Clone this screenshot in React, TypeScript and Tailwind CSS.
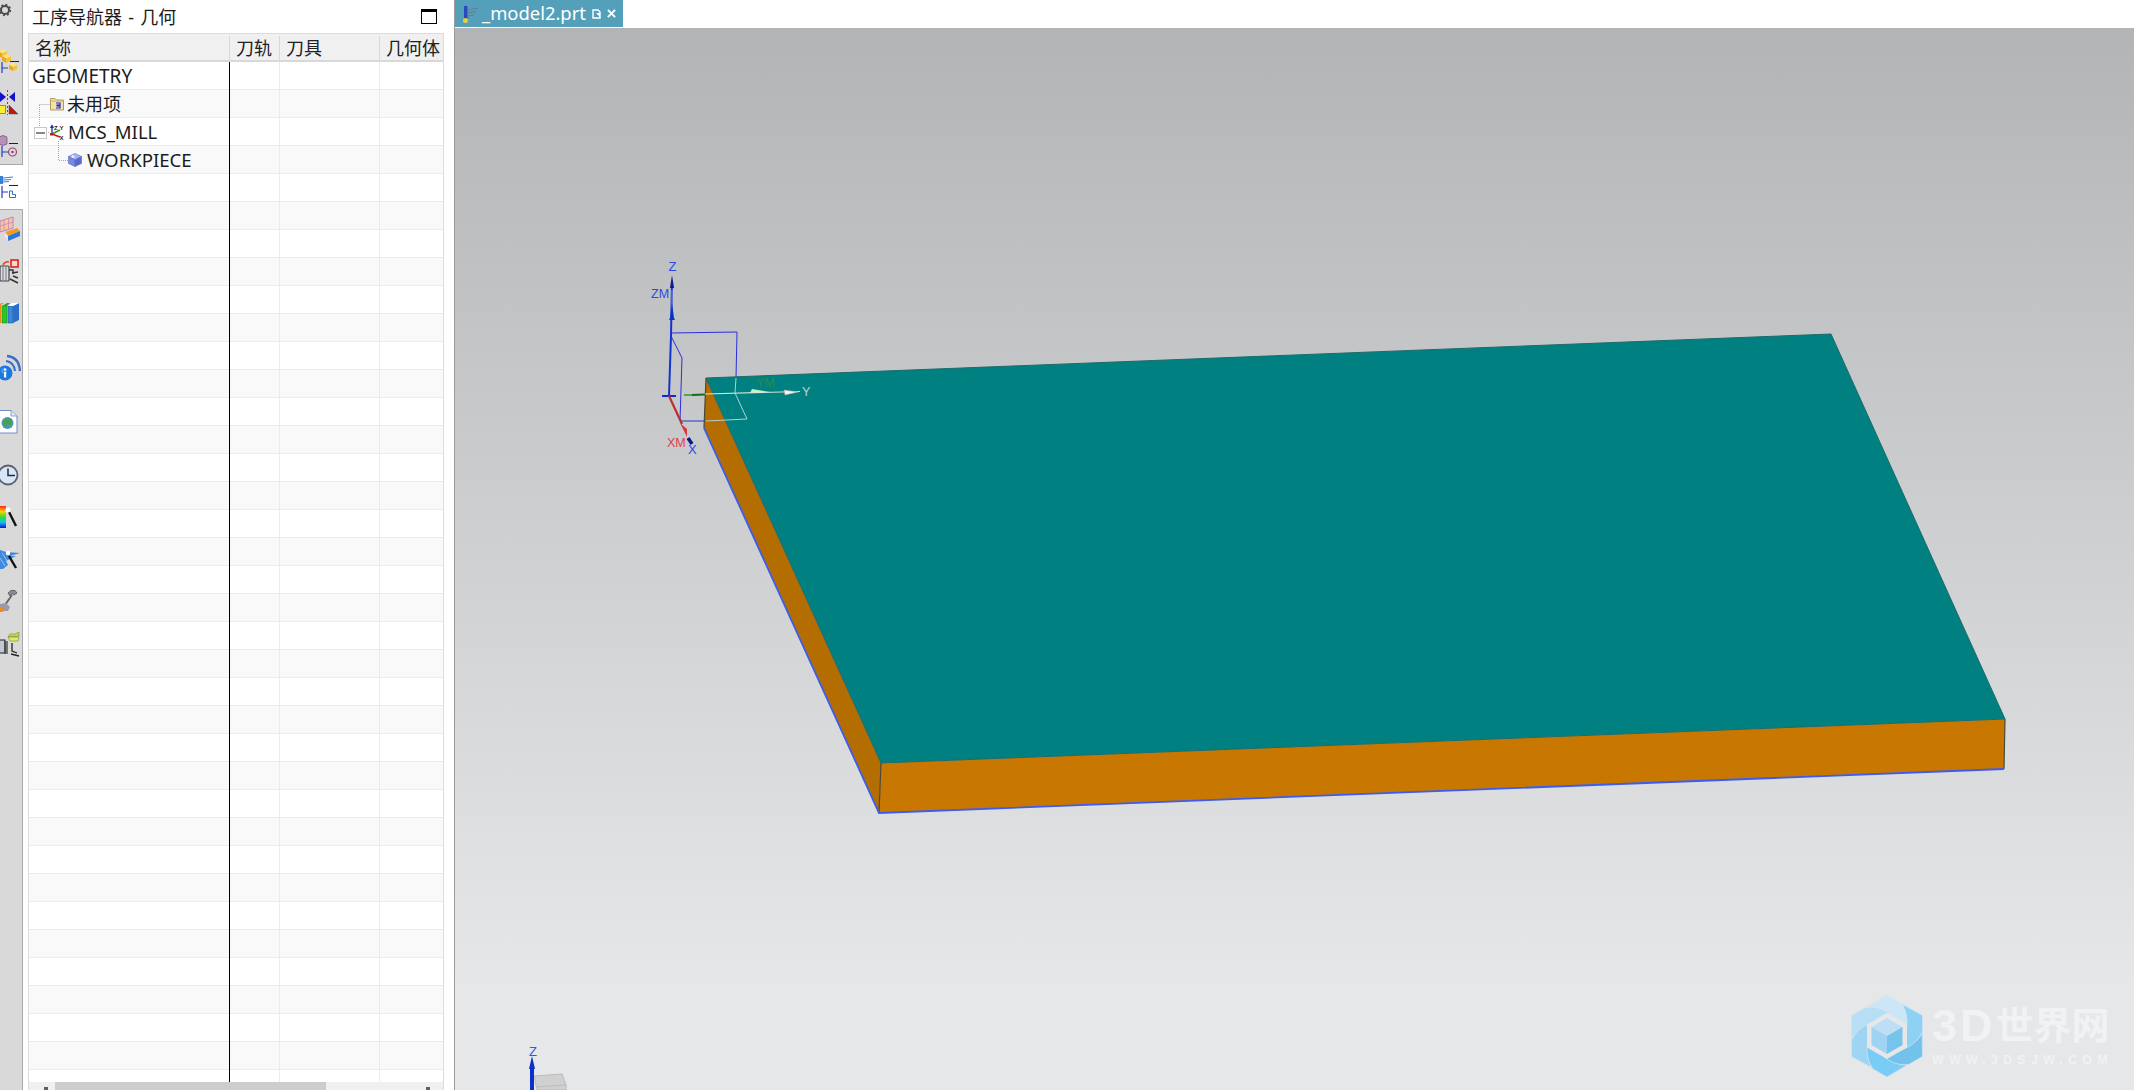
import React from "react";

const ROWS = Array.from({ length: 37 }, (_, i) => i);

function Cube({ x, y, s, top, left, right }: { x: number; y: number; s: number; top: string; left: string; right: string }) {
  const h = s / 4;
  return (
    <g>
      <polygon points={`${x},${y + h} ${x + s / 2},${y} ${x + s},${y + h} ${x + s / 2},${y + 2 * h}`} fill={top} />
      <polygon points={`${x},${y + h} ${x + s / 2},${y + 2 * h} ${x + s / 2},${y + 4 * h} ${x},${y + 3 * h}`} fill={left} />
      <polygon points={`${x + s},${y + h} ${x + s / 2},${y + 2 * h} ${x + s / 2},${y + 4 * h} ${x + s},${y + 3 * h}`} fill={right} />
    </g>
  );
}

function Rail() {
  return (
    <div className="flex w-[23px] shrink-0 flex-col overflow-hidden">
      <div className="flex h-[165px] shrink-0 flex-col border-r border-b border-[#a8a8a8] bg-[#d9d9d9]">
        <svg className="block h-[40px] w-[22px] shrink-0" viewBox="0 0 22 40">
          <circle cx="5" cy="10" r="4" fill="none" stroke="#4a4a4a" strokeWidth="2" />
          <circle cx="5" cy="10" r="5.4" fill="none" stroke="#4a4a4a" strokeWidth="1.5" strokeDasharray="2 2.2" />
        </svg>
        <svg className="block h-[42px] w-[22px] shrink-0" viewBox="0 40 22 42">
          <Cube x={-2} y={49} s={9} top="#ffe27a" left="#e8a820" right="#f4c430" />
          <Cube x={2} y={54} s={9} top="#ffe27a" left="#e8a820" right="#f4c430" />
          <path d="M10 61.5H19" stroke="#222" strokeWidth="1" />
          <path d="M2 62V73M2 68H8" stroke="#1f3fc0" strokeWidth="1.2" fill="none" />
          <Cube x={9} y={63} s={8} top="#ffe27a" left="#e8a820" right="#f4c430" />
        </svg>
        <svg className="block h-[42px] w-[22px] shrink-0" viewBox="0 82 22 42">
          <polygon points="0,92 6,97 0,102" fill="#1212c8" />
          <polygon points="15,92 9,97 15,102" fill="#1212c8" />
          <path d="M7.5 90V115" stroke="#333" strokeDasharray="2 2" strokeWidth="0.8" />
          <rect x="-1" y="105.5" width="6.5" height="8" fill="#ffee30" stroke="#555" strokeWidth="0.6" />
          <polygon points="9,105 18,114 9,114" fill="#c81010" stroke="#555" strokeWidth="0.5" />
        </svg>
        <svg className="block h-[40px] w-[22px] shrink-0" viewBox="0 124 22 40">
          <path d="M-1 137Q3 134 7 137V144Q3 147-1 144Z" fill="#b890b8" stroke="#7a4a7a" strokeWidth="0.7" />
          <path d="M9 143.5H18" stroke="#222" strokeWidth="1" />
          <path d="M2 146V157M2 152H8" stroke="#1f3fc0" strokeWidth="1.2" fill="none" />
          <circle cx="12.5" cy="152" r="4" fill="none" stroke="#a0407a" strokeWidth="1.2" />
          <circle cx="12.5" cy="152" r="1.3" fill="#a0407a" />
        </svg>
      </div>
      <svg className="block h-[44px] w-[23px] shrink-0 bg-white" viewBox="0 165 23 44">
        <path d="M0 176H3V184H0Z" fill="#3b7fd8" />
        <path d="M3 178L13 177M3 180L11 179.5M3 182L9 181.5" stroke="#3b7fd8" strokeWidth="1" />
        <path d="M9 185.5H18" stroke="#222" strokeWidth="1" />
        <path d="M2 186V198M2 192H8" stroke="#1f3fc0" strokeWidth="1.2" fill="none" />
        <path d="M9.5 191H12.5V194.5H15.5V197.5H9.5Z" fill="none" stroke="#2a6fd0" strokeWidth="1" />
      </svg>
      <div className="flex min-h-0 flex-1 flex-col border-r border-t border-[#a8a8a8] bg-[#d9d9d9]">
        <svg className="block h-[40px] w-[22px] shrink-0" viewBox="0 210 22 40">
          <path d="M0 221L13 217V228L0 232Z" fill="#f8c890" stroke="#b070d0" strokeWidth="0.8" />
          <path d="M4 220V231M8.5 218.5V229.5M0 226L13 222" stroke="#c080d0" strokeWidth="0.7" />
          <path d="M5 232L17 228L20 231L8 236Z" fill="#f59a20" />
          <path d="M8 236L20 231V236L8 241Z" fill="#2a78d8" />
          <path d="M5 232L8 236V241L5 237Z" fill="#e8e8e8" />
        </svg>
        <svg className="block h-[41px] w-[22px] shrink-0" viewBox="0 250 22 41">
          <rect x="0" y="266" width="9" height="15" rx="1" fill="#d8dce4" stroke="#444" strokeWidth="1.2" />
          <path d="M3 266V281M6 266V281" stroke="#777" strokeWidth="1" />
          <path d="M9 270H13V274M13 276L18 278M10 279L18 283M12 273L18 272" stroke="#333" strokeWidth="1.4" fill="none" />
          <rect x="11" y="260" width="7" height="7" fill="#ffd9c8" stroke="#d81818" strokeWidth="1.5" />
          <path d="M3 265Q5 261 9 262" stroke="#e84818" strokeWidth="1.5" fill="none" />
        </svg>
        <svg className="block h-[41px] w-[22px] shrink-0" viewBox="0 291 22 41">
          <path d="M-1 304L2 303H4L1 305V323H-1Z" fill="#e88a20" />
          <rect x="2" y="306" width="5" height="17" fill="#28c828" stroke="#1a7a1a" strokeWidth="0.5" />
          <path d="M2 306L7 303H10L7 306Z" fill="#3a9a40" />
          <rect x="8" y="306" width="5" height="17" fill="#3a88d8" stroke="#1a4a9a" strokeWidth="0.5" />
          <path d="M13 306L19 303V320L13 323Z" fill="#2a70c8" />
          <path d="M8 306L12 303H19L13 306Z" fill="#fff" />
        </svg>
        <svg className="block h-[60px] w-[22px] shrink-0" viewBox="0 332 22 60">
          <circle cx="5" cy="373" r="7.5" fill="#1a78e0" />
          <circle cx="4" cy="371" r="3" fill="#6ab8ff" opacity="0.5" />
          <rect x="4" y="372" width="2.2" height="5.5" fill="#fff" />
          <rect x="4" y="368.5" width="2.2" height="2" fill="#fff" />
          <path d="M6 361Q14 362 15 371" stroke="#3a6fc8" strokeWidth="2" fill="none" />
          <path d="M7 356Q19 357 20 371" stroke="#3a6fc8" strokeWidth="2.4" fill="none" />
        </svg>
        <svg className="block h-[53px] w-[22px] shrink-0" viewBox="0 392 22 53">
          <path d="M-1 410.5H11L17 416V433H-1Z" fill="#fff" stroke="#6f8fc8" strokeWidth="1" />
          <path d="M11 410.5V416H17" fill="#dfe8f8" stroke="#6f8fc8" strokeWidth="0.8" />
          <circle cx="7.5" cy="423" r="6" fill="#4a98b8" />
          <path d="M3 421Q8 417 12 420L11 425L7 424L5 428Z" fill="#4aa048" />
        </svg>
        <svg className="block h-[50px] w-[22px] shrink-0" viewBox="0 445 22 50">
          <circle cx="8" cy="475" r="9.5" fill="#d8e6f6" stroke="#5a6272" strokeWidth="1.8" />
          <path d="M8 468.5V475.5H15" stroke="#222a3a" strokeWidth="1.5" fill="none" />
        </svg>
        <svg className="block h-[43px] w-[22px] shrink-0" viewBox="0 495 22 43">
          <defs>
            <linearGradient id="rainbow" x1="0" y1="0" x2="0" y2="1">
              <stop offset="0" stopColor="#ff2020" />
              <stop offset="0.25" stopColor="#ffd000" />
              <stop offset="0.5" stopColor="#30e030" />
              <stop offset="0.75" stopColor="#10c0f0" />
              <stop offset="1" stopColor="#1010e0" />
            </linearGradient>
          </defs>
          <rect x="0" y="506" width="6" height="22" fill="url(#rainbow)" />
          <path d="M9 512L16 526" stroke="#111" strokeWidth="2.4" />
          <circle cx="8" cy="510" r="2.5" fill="#fff" />
        </svg>
        <svg className="block h-[42px] w-[22px] shrink-0" viewBox="0 538 22 42">
          <path d="M0 550L6 552L20 553L10 556L16 556L6 561L8 565L3 569H0Z" fill="#3f8ae0" />
          <path d="M2 553L8 562M0 558L5 566" stroke="#a8d0f8" strokeWidth="0.8" />
          <path d="M9 556L16 568" stroke="#111" strokeWidth="2.4" />
          <circle cx="8" cy="553" r="2.2" fill="#fff" />
        </svg>
        <svg className="block h-[42px] w-[22px] shrink-0" viewBox="0 580 22 42">
          <path d="M8 593L11 590.5H15L17 593L14 595L12 593.5L10 596Z" fill="#8a8a98" stroke="#444" strokeWidth="0.7" />
          <path d="M12 595L5 605" stroke="#666672" strokeWidth="2" />
          <path d="M0 604L6 603L10 607L8 611H0Z" fill="#9a9aa8" />
          <path d="M0 608H4L3 612H0Z" fill="#f08a20" />
        </svg>
        <svg className="block h-[43px] w-[22px] shrink-0" viewBox="0 622 22 43">
          <rect x="-1" y="640" width="6" height="13" fill="#c0c8d8" stroke="#222" strokeWidth="1" />
          <path d="M5 641V654M7 641V654" stroke="#333" strokeWidth="1.2" />
          <path d="M12 643V651L17 653M11 654L19 656" stroke="#222" strokeWidth="1.3" fill="none" />
          <path d="M8 637L10 634H15L19 632L19 636Z" fill="#c8d850" stroke="#7a8a20" strokeWidth="0.6" />
          <path d="M8 637H19L18 641H10Z" fill="#e4e870" stroke="#7a8a20" strokeWidth="0.6" />
        </svg>
      </div>
    </div>
  );
}

function FolderIcon() {
  return (
    <svg className="h-[14px] w-[14px] shrink-0" viewBox="0 0 14 14">
      <path d="M.5 1.5H5L6.5 3H13.5V13H.5Z" fill="#f3e2a6" stroke="#b09a58" />
      <path d="M.5 4H13.5" stroke="#c8b070" />
      <path d="M6 6H10V8H7V9H10V11H6" fill="none" stroke="#2020d8" strokeWidth="1.1" />
    </svg>
  );
}

function McsIcon() {
  return (
    <svg className="h-[16px] w-[15px] shrink-0" viewBox="0 0 15 16">
      <path d="M3 10V2M1.5 4L3 1.5L4.5 4" stroke="#2030c0" strokeWidth="1.3" fill="none" />
      <path d="M3 10L11 6" stroke="#28a028" strokeWidth="1.6" />
      <path d="M3 10L11 13" stroke="#c81818" strokeWidth="1.6" />
      <rect x="1" y="9" width="3" height="2.5" fill="#c81818" />
      <text x="5" y="5.5" fontSize="6" fontWeight="700" fill="#222" fontFamily="Liberation Sans, sans-serif">Z</text>
      <text x="10.5" y="6" fontSize="6" fontWeight="700" fill="#222" fontFamily="Liberation Sans, sans-serif">Y</text>
      <text x="10.5" y="16" fontSize="6" fontWeight="700" fill="#222" fontFamily="Liberation Sans, sans-serif">X</text>
    </svg>
  );
}

function WorkpieceIcon() {
  return (
    <svg className="h-[14px] w-[14px] shrink-0" viewBox="0 0 14 14">
      <polygon points="7,.5 13.5,3.5 7,7 .5,3.5" fill="#a8b4f0" stroke="#5a6ac8" strokeWidth="0.6" />
      <polygon points=".5,3.5 7,7 7,13.5 .5,10.5" fill="#7888e0" stroke="#5a6ac8" strokeWidth="0.6" />
      <polygon points="13.5,3.5 7,7 7,13.5 13.5,10.5" fill="#5868d0" stroke="#5a6ac8" strokeWidth="0.6" />
      <circle cx="5" cy="3.5" r="1.5" fill="#e8ecff" />
    </svg>
  );
}

function Table() {
  const labels: React.ReactNode[] = [
    <span key="g" className="pl-[3px] pt-[2px] text-[19px]">GEOMETRY</span>,
    <span key="u" className="flex items-center gap-[3px] pl-[21px]"><FolderIcon /><span>未用项</span></span>,
    <span key="m" className="flex items-center gap-[4px] pl-[20px]"><McsIcon /><span className="pt-[1px] text-[18.5px]">MCS_MILL</span></span>,
    <span key="w" className="flex items-center gap-[5px] pl-[39px]"><WorkpieceIcon /><span className="pt-[2px] text-[18.6px]">WORKPIECE</span></span>,
  ];
  return (
    <div className="relative flex h-[1057px] w-[416px] flex-col overflow-hidden border-x border-t border-[#dcdcdc]">
      <div className="flex h-[28px] shrink-0 border-b-2 border-[#d8d8d8] bg-[#f0f0f0] pt-[2px] text-[#222]">
        <div className="flex w-[201px] shrink-0 items-center border-r border-[#d8d8d8] pl-[6px]">名称</div>
        <div className="flex w-[50px] shrink-0 items-center border-r border-[#d8d8d8] pl-[6px]">刀轨</div>
        <div className="flex w-[100px] shrink-0 items-center border-r border-[#d8d8d8] pl-[6px]">刀具</div>
        <div className="flex flex-1 items-center pl-[6px]">几何体</div>
      </div>
      <div className="min-h-0 flex-1 overflow-hidden">
        {ROWS.map((i) => (
          <div key={i} className={i % 2 === 1 ? "flex h-[28px] border-b border-[#ebebeb] bg-[#f9f9f9]" : "flex h-[28px] border-b border-[#ebebeb] bg-white"}>
            <div className="flex w-[200px] shrink-0 items-center whitespace-nowrap text-[#1c1c1c]">{labels[i]}</div>
            <div className="w-[50px] shrink-0" />
            <div className="w-[100px] shrink-0 border-l border-[#ebebeb]" />
            <div className="flex-1 border-l border-[#ebebeb]" />
          </div>
        ))}
      </div>
      <div className="flex h-[8px] shrink-0 bg-[#f0f0f0]">
        <div className="w-[26px] shrink-0"><div className="ml-[15px] mt-[5px] h-[3px] w-[4px] bg-[#606060]" /></div>
        <div className="h-full w-[271px] shrink-0 bg-[#cdcdcd]" />
        <div className="flex-1"><div className="ml-[100px] mt-[5px] h-[3px] w-[4px] bg-[#606060]" /></div>
      </div>
      <div className="absolute bottom-[8px] left-[200px] top-[28px] w-px bg-black" />
      <svg className="absolute left-0 top-0 h-[180px] w-[100px]" viewBox="29 34 100 180">
        <path d="M39.5 104.5H50M39.5 105V127M46 132.5H50M58.5 141V160.5H69" fill="none" stroke="#a8a8a8" strokeDasharray="1 1" />
        <rect x="34.5" y="127.5" width="12" height="11" fill="#fff" stroke="#c8c8c8" />
        <path d="M36 133H45" stroke="#111" />
      </svg>
    </div>
  );
}

function Petal({ rot, color }: { rot: number; color: string }) {
  return (
    <path
      transform={`rotate(${rot})`}
      d="M-20 -29 L0 -41 L14 -33 C22 -22 23 -11 18 -5 L4 -20 C-3 -26 -11 -29 -20 -29Z"
      fill={color}
      stroke="#e6e7e9"
      strokeWidth="0.6"
    />
  );
}

function Watermark() {
  return (
    <div className="absolute bottom-[12px] right-[24px] flex items-center gap-[8px] font-['Liberation_Sans','Noto_Sans_CJK_SC',sans-serif] text-[#f1f2f3]">
      <svg className="h-[84px] w-[74px]" viewBox="-37 -42 74 84">
        <polygon points="0,-41 36,-20.5 36,20.5 0,41 -36,20.5 -36,-20.5" fill="#b6def5" />
        <Petal rot={0} color="#cbe6f6" />
        <Petal rot={60} color="#8dd1f4" />
        <Petal rot={120} color="#73c2ec" />
        <Petal rot={180} color="#79ccf6" />
        <Petal rot={240} color="#9dd5f3" />
        <Petal rot={300} color="#b6def5" />
        <polygon points="0,-23 20,-11.5 20,11.5 0,23 -20,11.5 -20,-11.5" fill="#e6e7e9" />
        <polygon points="0,-18 15.5,-9 0,0 -15.5,-9" fill="#bcdff6" />
        <polygon points="-15.5,-9 0,0 0,18 -15.5,9" fill="#9fd3f4" />
        <polygon points="15.5,-9 0,0 0,18 15.5,9" fill="#76c3ec" />
      </svg>
      <div className="flex w-[178px] flex-col pb-[2px]">
        <div className="flex h-[44px] items-center font-bold leading-none">
          <span className="text-[45px] tracking-[3px]">3D</span>
          <span className="text-[38px]">世界网</span>
        </div>
        <div className="mt-[6px] whitespace-nowrap text-[12.5px] font-bold leading-none tracking-[5.2px]">WWW.3DSJW.COM</div>
      </div>
    </div>
  );
}

function Viewport() {
  return (
    <div className="relative min-h-0 flex-1 bg-[linear-gradient(180deg,#b3b4b5_0%,#e6e7e9_90%)]">
      <svg className="absolute left-0 top-0 h-[1062px] w-[1679px]" viewBox="455 28 1679 1062">
        <path d="M662 396H676" stroke="#1226d8" strokeWidth="2" />
        <path d="M671 333L737 332L736 378M671 336L682 358L680 421L706 421" fill="none" stroke="#2a2ee0" strokeWidth="1" />

        <polygon points="706,378 881,763 879,813 704,428" fill="#b36d00" />
        <polygon points="881,763 2005,719 2004,769 879,813" fill="#c87800" />
        <polygon points="706,378 1831,334 2005,719 881,763" fill="#008080" stroke="#1f6a6a" strokeWidth="1" />
        <path d="M706 378L704 428M881 763L879 813M2005 719L2004 769" stroke="#4a4a3a" strokeWidth="1.2" fill="none" />
        <path d="M704 428L879 813L2004 769" fill="none" stroke="#3a5cf0" strokeWidth="1.8" />

        <path d="M669 396L671 336L672 282" fill="none" stroke="#1034d0" strokeWidth="2" />
        <path d="M672 290V320" stroke="#8a86d8" strokeWidth="1" />
        <polygon points="670,318 672,303 674,318 675,320 669,320" fill="#0a32c8" />
        <polygon points="670,288 672,275 674,288" fill="#0a1a90" />
        <path d="M669 396L682 424" stroke="#b83030" strokeWidth="2.2" />
        <polygon points="680,423 687,429 687,437" fill="#d83838" />
        <path d="M688 438L692 444" stroke="#0a1a90" strokeWidth="3.5" />
        <path d="M684 395L692 395" stroke="#2a9a2a" strokeWidth="1.5" />
        <path d="M692 395L705 394.5" stroke="#1c6a1c" strokeWidth="2" />
        <path d="M705 394L800 391.5" stroke="#d4e4d8" strokeWidth="1.2" />
        <polygon points="750,393 752,389 770,392" fill="#c8f0d0" />
        <polygon points="784,390 785,395 798,392" fill="#f4f4f4" stroke="#a8a8a8" strokeWidth="0.6" />
        <path d="M736 378L735 393L747 419L706 421" fill="none" stroke="#b4d0d0" strokeWidth="1" />
        <text x="672.5" y="271" fontSize="13" textAnchor="middle" fill="#2a4ae8" fontFamily="Liberation Sans, sans-serif">Z</text>
        <text x="651" y="298" fontSize="12.5" fill="#2a4ae8" fontFamily="Liberation Sans, sans-serif">ZM</text>
        <text x="756" y="387" fontSize="12.5" fill="#2a8a4a" fontFamily="Liberation Sans, sans-serif">YM</text>
        <text x="802" y="396" fontSize="12.5" fill="#c8d0d0" fontFamily="Liberation Sans, sans-serif">Y</text>
        <text x="667" y="447" fontSize="12.5" fill="#e04050" fontFamily="Liberation Sans, sans-serif">XM</text>
        <text x="688" y="454" fontSize="13" fill="#2a4ae8" fontFamily="Liberation Sans, sans-serif">X</text>

        <polygon points="534,1076 562,1074 566,1085 566,1090 537,1090" fill="#d0d0d0" stroke="#bcbcbc" strokeWidth="1" />
        <path d="M537 1087L566 1085" stroke="#bcbcbc" strokeWidth="1" />
        <path d="M532 1064V1090" stroke="#0a32c8" strokeWidth="4" />
        <polygon points="532,1056 535,1069 529,1069" fill="#0a32c8" />
        <text x="533" y="1056" fontSize="13" textAnchor="middle" fill="#2a5af0" fontFamily="Liberation Sans, sans-serif">Z</text>
      </svg>
      <Watermark />
    </div>
  );
}

export default function App() {
  return (
    <div className="flex h-[1090px] w-[2134px] overflow-hidden bg-white font-['Noto_Sans','Noto_Sans_CJK_SC',sans-serif] text-[18px] leading-none">
      <Rail />
      <div className="flex w-[432px] shrink-0 flex-col border-r border-[#9a9a9a] pl-[5px]">
        <div className="flex h-[33px] shrink-0 items-center justify-between pl-[4px] pr-[17px] text-[#1c1c1c] [word-spacing:1.5px]">
          <span>工序导航器 - 几何</span>
          <div className="h-[15px] w-[16px] border border-t-[3px] border-black" />
        </div>
        <Table />
      </div>
      <div className="flex min-w-0 flex-1 flex-col">
        <div className="flex h-[28px] shrink-0 bg-white">
          <div className="flex h-[27px] w-[168px] items-center bg-[#54a0ba] pl-[6px] text-white">
            <svg className="h-[20px] w-[18px] shrink-0" viewBox="0 0 18 20">
              <rect x="3" y="2" width="3.5" height="13" fill="#2a48c0" />
              <path d="M7 6L17 4M7 9L15 7.5M7 12L13 11" stroke="#6a7a8a" strokeWidth="1" />
              <circle cx="4.5" cy="16.5" r="2.5" fill="#e8d030" />
            </svg>
            <span className="ml-[3px] whitespace-nowrap text-[18.4px]">_model2.prt</span>
            <svg className="ml-[6px] h-[10px] w-[9px] shrink-0" viewBox="0 0 9 10">
              <path d="M1 1H6L8 3V9H1Z" fill="#54a0ba" stroke="#fff" strokeWidth="1.4" />
              <path d="M4 4H8V8" fill="#fff" />
            </svg>
            <svg className="ml-[6px] h-[9px] w-[9px] shrink-0" viewBox="0 0 10 10">
              <path d="M1 1L9 9M9 1L1 9" stroke="#fff" strokeWidth="2.2" />
            </svg>
          </div>
        </div>
        <Viewport />
      </div>
    </div>
  );
}
